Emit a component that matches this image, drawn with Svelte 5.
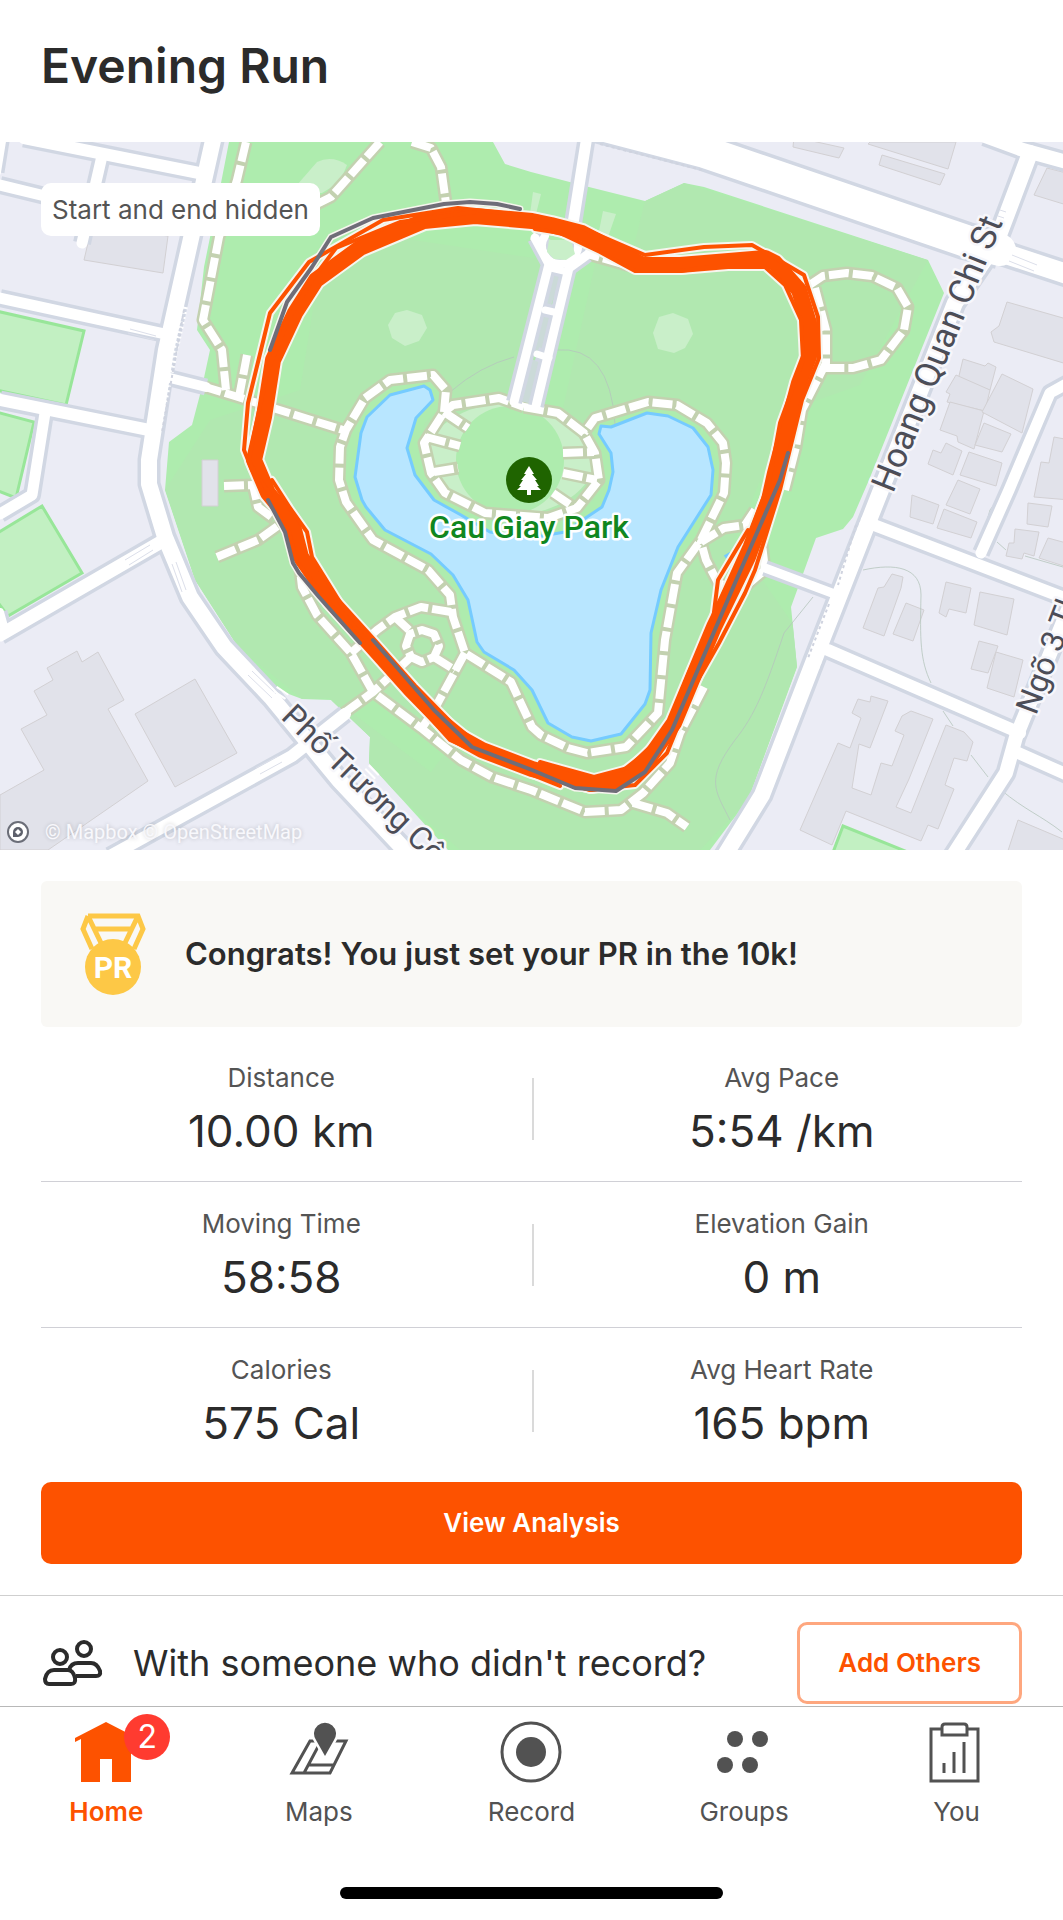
<script lang="ts">
  type Road = { d: string; w: number };

  const stats = [
    [
      { label: 'Distance', value: '10.00 km' },
      { label: 'Avg Pace', value: '5:54 /km' }
    ],
    [
      { label: 'Moving Time', value: '58:58' },
      { label: 'Elevation Gain', value: '0 m' }
    ],
    [
      { label: 'Calories', value: '575 Cal' },
      { label: 'Avg Heart Rate', value: '165 bpm' }
    ]
  ];

  const tabs = [
    { id: 'home', label: 'Home', badge: 2 },
    { id: 'maps', label: 'Maps' },
    { id: 'record', label: 'Record' },
    { id: 'groups', label: 'Groups' },
    { id: 'you', label: 'You' }
  ];

  let active = $state('home');

  const park =
    'M229 142L221 183L204 267L197 330L210 350L202 387L192 425L169 442L165 490L195 580L238 647L278 690L302 699L331 700L370 737L369 763L448 850H710L731 822L748 800L797 667L791 607L816 538L843 529L853 517L869 480L944 293L928 260L704 187L684 183L645 201L589 187L531 172L505 164L493 142Z';

  const lake =
    'M424 386L390 395L367 417L361 433L355 477L362 500L366 507L385 530L431 554L453 575L468 600L477 642L484 652L514 670L532 690L548 723L572 737L591 741L621 734L645 704L650 690L651 633L661 590L678 547L711 495L713 470L708 447L693 428L668 416L647 413L611 427L601 426L599 434L611 453L613 472L609 490L602 507L587 517L565 532L530 538L490 532L461 515L434 500L415 475L407 448L416 418L433 400L430 390Z';

  const roads: Road[] = [
    { d: 'M0 185L82 205', w: 11 },
    { d: 'M3 135L-3 172', w: 8 },
    { d: 'M24 138L204 174', w: 12 },
    { d: 'M102 156L82 243', w: 11 },
    { d: 'M0 298L165 334', w: 11 },
    { d: 'M0 400L149 430', w: 12 },
    { d: 'M45 413L32 495L0 514', w: 11 },
    { d: 'M0 612L5 630', w: 8 },
    { d: 'M0 635L161 542', w: 13 },
    { d: 'M110 856L292 756L345 714', w: 12 },
    { d: 'M166 377L206 387', w: 10 },
    { d: 'M590 122L705 152L966 241L1000 250', w: 32 },
    { d: 'M966 241L1070 275', w: 20 },
    { d: 'M985 136L1023 150L1070 163', w: 14 },
    { d: 'M1030 153L996 243L955 303L877 500L813 663L762 795L722 860', w: 16 },
    { d: 'M874 525L1070 600', w: 12 },
    { d: 'M828 650L1020 733', w: 12 },
    { d: 'M1016 752L1070 776', w: 12 },
    { d: 'M1070 605L1016 737L1006 773L950 860', w: 14 },
    { d: 'M1070 382L1050 393L1009 490L981 553', w: 11 },
    { d: 'M214 136L166 350L149 460L149 484L165 537L190 597L224 647L271 697L339 780L414 860', w: 16 },
    { d: 'M587 136L571 236', w: 11 },
    { d: 'M765 568L840 596', w: 9 },
    { d: 'M535 238L549 264L514 402', w: 9 },
    { d: 'M587 255L569 268L536 406', w: 9 },
    { d: 'M545 236A18 18 0 1 0 577 240', w: 8 },
    { d: 'M545 310L558 313M537 354L549 358M551 268L568 272', w: 7 }
  ];

  const trails = [
    'M246 142L237 180L219 237L203 320L222 350L226 390',
    'M380 142L331 197L317 204',
    'M412 142L431 148L441 167L446 203',
    'M202 386L238 397L343 430',
    'M247 355L239 397',
    'M444 412L446 390L433 375L390 380L365 398L346 430L340 447L339 480L346 502L373 540L428 570L450 595L453 617L465 653L511 682L532 727L541 735L568 748L587 753L626 747L658 713L665 640L677 573L701 540L724 493L726 463L723 443L707 423L677 405L648 402L595 418L584 433',
    'M524 407L558 413L584 433L595 453L599 480L577 508L548 518L485 513L445 493L431 473L424 443L444 412L453 405L499 398L524 407',
    'M444 412L468 428M426 437L460 446M434 472L458 468M563 453L594 452M563 473L597 480M553 493L575 508',
    'M808 286L823 276L847 273L872 276L897 288L908 307L904 330L881 360L853 368L823 368',
    'M815 288L826 330L826 363L802 410L796 447L785 490',
    'M755 510L745 525L724 528L701 542L706 560L718 583L741 590L765 570L761 536',
    'M765 568L802 582',
    'M704 687L680 733L670 763L643 793L621 810L585 812L531 790L492 777L461 760L421 728L373 692L351 653L317 615L302 587L300 570',
    'M633 803L667 813L687 827',
    'M217 557L258 540L282 523',
    'M224 486L253 485L258 507L274 519',
    'M351 653L377 630L395 617L421 607L451 612',
    'M395 617L409 630M344 713L373 692L411 657M434 657L455 670M465 653L434 710L422 728',
    'M422 630L434 634L439 646L434 657L422 662L411 657L406 646L410 634Z',
    'M540 240L532 236M580 252L630 266'
  ];

  const buildings = [
    'M92 226L168 236L163 273L84 260Z',
    'M202 460H218V506H202Z',
    'M77 651L82 662L98 652L124 700L108 709L148 781L48 850H0V795L44 770L21 729L47 715L34 691L53 680L47 668Z',
    'M195 679L237 753L175 787L135 714Z',
    'M794 137L844 148L839 158L793 147Z',
    'M870 142H956L948 169L868 144Z',
    'M882 155L945 174L940 185L879 165Z',
    'M1047 168L1070 174V206L1034 195Z',
    'M1007 302L1070 320V365L994 342L991 332L999 326Z',
    'M963 359L985 366L988 363L996 367L990 390L958 380Z',
    'M956 375L990 390L985 411L947 402L950 394L946 392Z',
    'M950 402L984 411L974 449L958 442L957 436L940 430Z',
    'M1002 374L1033 389L1022 433L982 412Z',
    'M984 423L1011 434L1002 452L975 445Z',
    'M946 443L962 451L953 475L928 464L933 450L941 453Z',
    'M969 452L1002 463L996 486L960 475Z',
    'M958 480L980 489L970 514L946 505Z',
    'M912 495L939 505L933 524L910 517Z',
    'M944 509L977 522L971 538L937 528Z',
    'M1054 437L1070 440V500L1034 497L1041 462L1049 463Z',
    'M1028 503L1052 506L1048 527L1027 524Z',
    'M1015 529L1039 532L1034 556L1024 553L1022 559L1006 556L1009 543L1014 543Z',
    'M1048 538L1070 544V568L1039 558Z',
    'M892 574L903 577L901 588L884 636L863 628L878 588L884 587Z',
    'M906 603L924 610L913 641L893 634Z',
    'M946 582L971 588L966 613L949 609L946 617L939 613Z',
    'M980 592L1014 599L1007 635L974 625Z',
    'M979 641L998 646L988 673L971 669Z',
    'M996 652L1023 660L1014 697L987 688Z',
    'M871 696L888 701L870 748L859 744L852 788L871 795L881 763L892 766L904 735L895 731L902 716L911 711L933 719L909 779L896 807L911 813L946 725L964 732L973 742L967 761L954 758L945 785L954 789L938 829L928 825L921 841L846 811L832 845L800 830L838 743L850 748L861 718L852 713L858 699L870 702Z',
    'M1018 820L1070 842V860H1005Z'
  ];

  const lawns = [
    'M-4 311L84 331L66 405L-4 390Z',
    'M-4 412L34 422L16 498L-4 490Z',
    'M-4 534L42 506L82 573L8 616L-4 600Z',
    'M843 826L915 855H832Z'
  ];

  const footways = [
    'M863 570C895 563 921 567 921 595C920 640 920 660 931 683',
    'M813 597L784 633C765 690 755 715 735 740C705 780 715 790 730 820',
    'M943 711L953 726M971 755L988 777M1001 790C1025 810 1040 815 1062 832',
    'M450 392Q480 366 514 357M556 350Q610 345 615 424',
    'M1008 486L990 510L985 528M997 542L1006 550M1025 556L1063 567'
  ];

  const mainLoop =
    'M551 225L532 221L475 216L424 221L360 248L316 280L295 313L273 360L264 417L254 460L268 493L292 522L301 557L331 601L371 645L411 690L455 735L482 750L532 769L592 784L623 778L650 757L674 723L714 627L748 557L769 500L775 473L799 383L809 357L809 323L799 290L775 263L765 258L680 265L643 265L582 233Z';

  const laps = [
    'M540 217L458 208L383 220L309 262L270 313L248 403L244 450L252 470L271 495',
    'M475 212L400 222L336 248L312 280L288 320L268 370L258 415L249 460L262 490',
    'M272 480L290 508L307 532L312 557L343 607L380 650L430 705L478 744L540 770',
    'M262 490L289 532L297 562L325 598L366 645L405 690L450 740L490 758L560 786',
    'M532 773L590 790L635 785L667 753L694 687L719 643L745 593L755 570L780 490L802 400L819 358L818 317L804 275L775 258L752 245L704 247L645 255L580 227',
    'M748 530L718 580L713 620L690 670L665 733L628 768L594 777L540 762',
    'M535 229L560 233L600 252L635 271L680 271L710 267L765 267L785 285L801 320L803 360L780 423L769 483L745 545L719 602'
  ];

  const tails = [
    'M520 209L497 204L470 202L444 204L373 218L331 237L312 267L287 302L270 350',
    'M268 500L285 532L293 563L299 573L319 597L360 643',
    'M373 640L434 710L472 747L532 770L575 788L616 791L645 772L672 730L735 583L780 480L788 453'
  ];
</script>

<div class="screen">
  <header class="header">
    <h1>Evening Run</h1>
  </header>

  <div class="map">
    <svg class="map-art" viewBox="0 142 1063 708" role="img" aria-label="Route map of Cau Giay Park">
      <defs>
        <clipPath id="park-area"><path d={park} /></clipPath>
      </defs>
      <rect x="0" y="142" width="1063" height="708" fill="#ebecf5" />
      {#each lawns as d}
        <path {d} fill="#c2f0c2" stroke="#98e699" stroke-width="3" />
      {/each}
      <path d={park} fill="#aeecae" />
      <path
        clip-path="url(#park-area)"
        d="M645 201L684 183L928 260L860 385L790 410L735 540L797 630V667L748 800L700 850H460L370 770L330 698L302 699L238 647L195 580L165 490L210 420L300 390L316 290L380 235L560 262L630 262Z"
        fill="#b1e8b0"
      />
      <g fill="none" stroke="#aeecae" stroke-linejoin="round">
        <path d={lake} stroke-width="20" />
        <path d="M585 240L545 420M360 700L440 760" stroke-width="30" />
      </g>
      <g fill="#c9efc9">
        <path d="M407 310L422 315L427 328L419 341L405 346L392 338L388 325L395 313Z" />
        <path d="M673 313L688 319L693 334L685 348L674 353L658 349L653 333L659 317Z" />
        <path d="M317 162Q332 155 347 165L340 182L322 193H290Z" />
        <path d="M603 211L616 214L607 240L598 236ZM533 192L541 194L536 214H530Z" />
      </g>
      {#each buildings as d}
        <path {d} fill="#e1e2ea" stroke="#d2d0d3" stroke-width="1" />
      {/each}
      {#each footways as d}
        <path {d} fill="none" stroke="#b5c5bd" stroke-width="1" opacity="0.8" />
      {/each}

      <path d={lake} fill="#b8e6ff" stroke="#75cbff" stroke-width="3" stroke-linejoin="round" />
      <ellipse cx="510" cy="459" rx="84" ry="56" fill="#c9efc9" />
      <circle cx="510" cy="460" r="54" fill="#aeecae" />
      <path d="M731 553L726 556L729 560" fill="none" stroke="#75cbff" stroke-width="3" />

      <g fill="none" stroke-linejoin="round">
        <g stroke="#c3d1b0" stroke-width="13">
          {#each trails as d}
            <path {d} />
          {/each}
        </g>
        <g stroke="#ffffff" stroke-width="8" stroke-dasharray="20 4">
          {#each trails as d}
            <path {d} />
          {/each}
        </g>
        <path d="M557 272L543 310M548 317L536 354M534 360L524 402" stroke="#cbdad8" stroke-width="12" />
        {#each roads as r}
          <path d={r.d} stroke="#d1d7e3" stroke-width={r.w + 7} />
        {/each}
        {#each roads as r}
          <path d={r.d} stroke="#ffffff" stroke-width={r.w} stroke-linecap="round" />
        {/each}
        <g stroke="#dcdfea" stroke-width="1">
          <path d="M130 329L156 336M128 333L154 340M125 560L150 545M129 565L153 550M172 564L182 592M176 562L186 590M248 675L272 698M252 671L276 694M256 768L278 756M260 774L282 762M1009 261L1034 271M1012 255L1037 265M1000 210L1006 212M998 216L1004 218" />
        </g>
        <g stroke="#ffffff" stroke-width="14" stroke-dasharray="2 3">
          <path d="M181 306L153 435M868 520L812 668M283 690L275 702M366 778L376 768" />
        </g>
        <g stroke="#cfd3df" stroke-width="2" stroke-dasharray="3 3">
          <path d="M184 310L162 432M856 525L838 585M829 604L808 658M600 144L702 170" />
        </g>
      </g>
      <path d="M549 240L571 240L575 254L566 260L554 259L547 252Z" fill="#c9efc9" />

      <g fill="none" stroke-linejoin="round" stroke-linecap="round">
        <g stroke="#f7f5ef">
          <path d={mainLoop} stroke-width="20" />
          {#each laps as d}
            <path {d} stroke-width="8" />
          {/each}
          {#each tails as d}
            <path {d} stroke-width="7" />
          {/each}
        </g>
        <g stroke="#fd5200">
          <path d={mainLoop} stroke-width="16" />
          {#each laps as d}
            <path {d} stroke-width="4" />
          {/each}
        </g>
        <g stroke="#6f6d78" stroke-width="4">
          {#each tails as d}
            <path {d} />
          {/each}
        </g>
      </g>

      <circle cx="529" cy="480" r="23" fill="#1f6400" />
      <path
        d="M529 466L534 474H532L537 480H535L539 486H537L541 490H531V495H527V490H517L521 486H519L523 480H521L526 474H524Z"
        fill="#ffffff"
      />
      <text class="place" x="529" y="538" text-anchor="middle">Cau Giay Park</text>
      <text class="street major" transform="translate(893 494) rotate(-68)">Hoang Quan Chi St</text>
      <text class="street" transform="translate(280 718) rotate(44)">Phố Trương Cô</text>
      <text class="street" transform="translate(1036 716) rotate(-69)">Ngõ 3 Tl</text>
    </svg>
    <span class="privacy">Start and end hidden</span>
    <div class="attribution">
      <svg viewBox="0 0 24 24" width="24" height="24" aria-hidden="true">
        <circle cx="12" cy="12" r="10" fill="#ffffff" stroke="#6b6e78" stroke-width="2" />
        <path d="M7 17V12A5 5 0 1 1 12 17Z" fill="#5d606b" />
        <path d="M12 9L15 12L12 15L9 12Z" fill="#ffffff" />
      </svg>
      <span><a href="#mapbox">© Mapbox</a> <a href="#osm">© OpenStreetMap</a></span>
    </div>
  </div>

  <main class="content">
    <div class="banner">
      <svg class="medal" viewBox="0 0 68 82" width="68" height="82" aria-hidden="true">
        <g fill="none" stroke="#fdc846" stroke-width="5">
          <path d="M9 3H59L64 16L55 36M9 3L4 16L13 36M9 3L23 32M59 3L45 32M15 16H53" />
        </g>
        <circle cx="34" cy="54" r="28" fill="#fdc846" />
        <text class="medal-text" x="34" y="65" text-anchor="middle">PR</text>
      </svg>
      <p>Congrats! You just set your PR in the 10k!</p>
    </div>

    <dl class="stats">
      {#each stats as row}
        <div class="row">
          {#each row as stat}
            <div class="stat">
              <dt>{stat.label}</dt>
              <dd>{stat.value}</dd>
            </div>
          {/each}
        </div>
      {/each}
    </dl>

    <button class="analysis" type="button">View Analysis</button>
  </main>

  <section class="others">
    <svg viewBox="0 0 60 48" width="60" height="48" fill="none" stroke="#2b2b2b" stroke-width="4" aria-hidden="true">
      <circle cx="17" cy="18" r="7" />
      <circle cx="41" cy="10" r="7" />
      <path d="M11 31H25Q30 31 32 39Q33 45 28 45H6Q2 45 2 40Q4 31 11 31Z" />
      <path d="M26 31Q28 24 35 24H48Q54 24 57 32Q58 37 53 37H33" />
    </svg>
    <p>With someone who didn't record?</p>
    <button class="add" type="button">Add Others</button>
  </section>

  <nav class="tabs">
    {#each tabs as tab}
      <button class="tab" class:active={tab.id === active} type="button" onclick={() => (active = tab.id)}>
        <span class="icon">
          <svg viewBox="0 0 62 62" width="62" height="62" fill="none" stroke="currentColor" stroke-width="3" aria-hidden="true">
            {#if tab.id === 'home'}
              <path
                d="M31 1L62 17V21L56 18V61H37V38H25V61H6V18L0 21V17Z"
                fill="currentColor"
                stroke="none"
              />
            {:else if tab.id === 'maps'}
              <path d="M22 20H58L42 52H4ZM16 52L32 22M20 44H46" />
              <path
                d="M37 35L28 19A11 11 0 1 1 46 19Z"
                fill="currentColor"
                stroke="#ffffff"
                stroke-width="5"
                paint-order="stroke"
              />
            {:else if tab.id === 'record'}
              <circle cx="31" cy="31" r="29" />
              <circle cx="31" cy="31" r="15" fill="currentColor" stroke="none" />
            {:else if tab.id === 'groups'}
              <g fill="currentColor" stroke="none">
                <circle cx="22" cy="18" r="8" />
                <circle cx="47" cy="18" r="8" />
                <circle cx="12" cy="44" r="8" />
                <circle cx="37" cy="44" r="8" />
              </g>
            {:else}
              <path d="M15 8H5V60H52V8H42" />
              <path d="M16 14V6Q16 3 19 3H38Q41 3 41 6V14Z" />
              <path d="M18 42V52M28 31V52M38 21V52" />
            {/if}
          </svg>
          {#if tab.badge}
            <span class="badge">{tab.badge}</span>
          {/if}
        </span>
        <span>{tab.label}</span>
      </button>
    {/each}
  </nav>
  <div class="home-bar"></div>
</div>

<style>
  :global(body) {
    margin: 0;
    background: #ffffff;
  }

  .screen {
    font-family: Inter, 'Liberation Sans', sans-serif;
    color: #2b2b2b;
    padding-bottom: 21px;
  }

  .header {
    padding: 37px 41px 47px;
  }

  h1 {
    margin: 0;
    font-size: 48px;
    line-height: 58px;
    font-weight: 600;
  }

  p {
    margin: 0;
  }

  button {
    font: inherit;
    cursor: pointer;
  }

  .map {
    position: relative;
  }

  .map-art {
    display: block;
    width: 100%;
    height: auto;
  }

  .place,
  .street {
    font-family: Roboto, sans-serif;
    font-size: 32px;
    stroke: #ffffff;
    stroke-width: 5px;
    stroke-linejoin: round;
    paint-order: stroke;
  }

  .place {
    font-weight: 500;
    fill: #10871f;
  }

  .street {
    fill: #4c4d57;
    stroke: #f7f7fb;
  }

  .major {
    font-size: 35px;
  }

  .privacy {
    position: absolute;
    top: 41px;
    left: 41px;
    padding: 10px 11px;
    border-radius: 10px;
    background: #ffffff;
    color: #545454;
    font-size: 26px;
    line-height: 33px;
  }

  .attribution {
    position: absolute;
    left: 6px;
    bottom: 6px;
    display: flex;
    align-items: center;
    gap: 15px;
    font-family: Roboto, sans-serif;
    font-size: 20px;
    line-height: 24px;
  }

  .attribution a {
    color: #f8f8fc;
    text-decoration: none;
    text-shadow: 0 0 4px rgba(0, 0, 0, 0.2);
  }

  .content {
    padding: 31px 41px;
  }

  .banner {
    display: flex;
    align-items: center;
    gap: 38px;
    padding: 32px 38px;
    border-radius: 6px;
    background: #f9f8f5;
    font-size: 31px;
    line-height: 40px;
    font-weight: 600;
  }

  .medal {
    flex: none;
  }

  .medal-text {
    font-family: Roboto, sans-serif;
    font-size: 30px;
    font-weight: 700;
    fill: #ffffff;
  }

  .stats {
    margin: 9px 0 8px;
  }

  .row {
    display: flex;
    gap: 10px;
    border-bottom: 1px solid #d0d0d6;
  }

  .row:last-child {
    border-bottom-color: transparent;
  }

  .stat {
    flex: 1;
    display: flex;
    flex-direction: column;
    gap: 10px;
    padding: 25px 0 24px;
    text-align: center;
  }

  .stat + .stat {
    padding-left: 10px;
    background: linear-gradient(#dadada, #dadada) left center / 2px 62px no-repeat;
  }

  dt {
    color: #545454;
    font-size: 26px;
    line-height: 34px;
  }

  dd {
    margin: 0;
    font-size: 44px;
    line-height: 52px;
  }

  .analysis {
    display: block;
    width: 100%;
    padding: 24px;
    border: 0;
    border-radius: 10px;
    background: #fd5200;
    color: #ffffff;
    font-size: 26px;
    line-height: 34px;
    font-weight: 600;
  }

  .others {
    display: flex;
    align-items: center;
    gap: 30px;
    padding: 26px 41px 2px 43px;
    border-top: 1px solid #cfcfcf;
    font-size: 36px;
    line-height: 46px;
  }

  .add {
    margin-left: auto;
    padding: 21px 38px;
    border: 3px solid #fea77f;
    border-radius: 10px;
    background: #ffffff;
    color: #fd5200;
    font-size: 26px;
    line-height: 34px;
    font-weight: 600;
  }

  .tabs {
    display: flex;
    border-top: 1px solid #b8b8b8;
  }

  .tab {
    flex: 1;
    display: flex;
    flex-direction: column;
    align-items: center;
    gap: 12px;
    padding: 14px 0 0;
    border: 0;
    background: none;
    color: #525252;
    font-size: 26px;
    line-height: 34px;
  }

  .tab.active {
    color: #fd5200;
    font-weight: 600;
  }

  .icon {
    position: relative;
    height: 62px;
  }

  .badge {
    position: absolute;
    top: -7px;
    left: 49px;
    width: 46px;
    height: 46px;
    border-radius: 50%;
    background: #ff3b30;
    color: #ffffff;
    font-size: 32px;
    line-height: 46px;
    font-weight: 400;
  }

  .home-bar {
    width: 36%;
    height: 12px;
    margin: 58px auto 0;
    border-radius: 6px;
    background: #000000;
  }
</style>
